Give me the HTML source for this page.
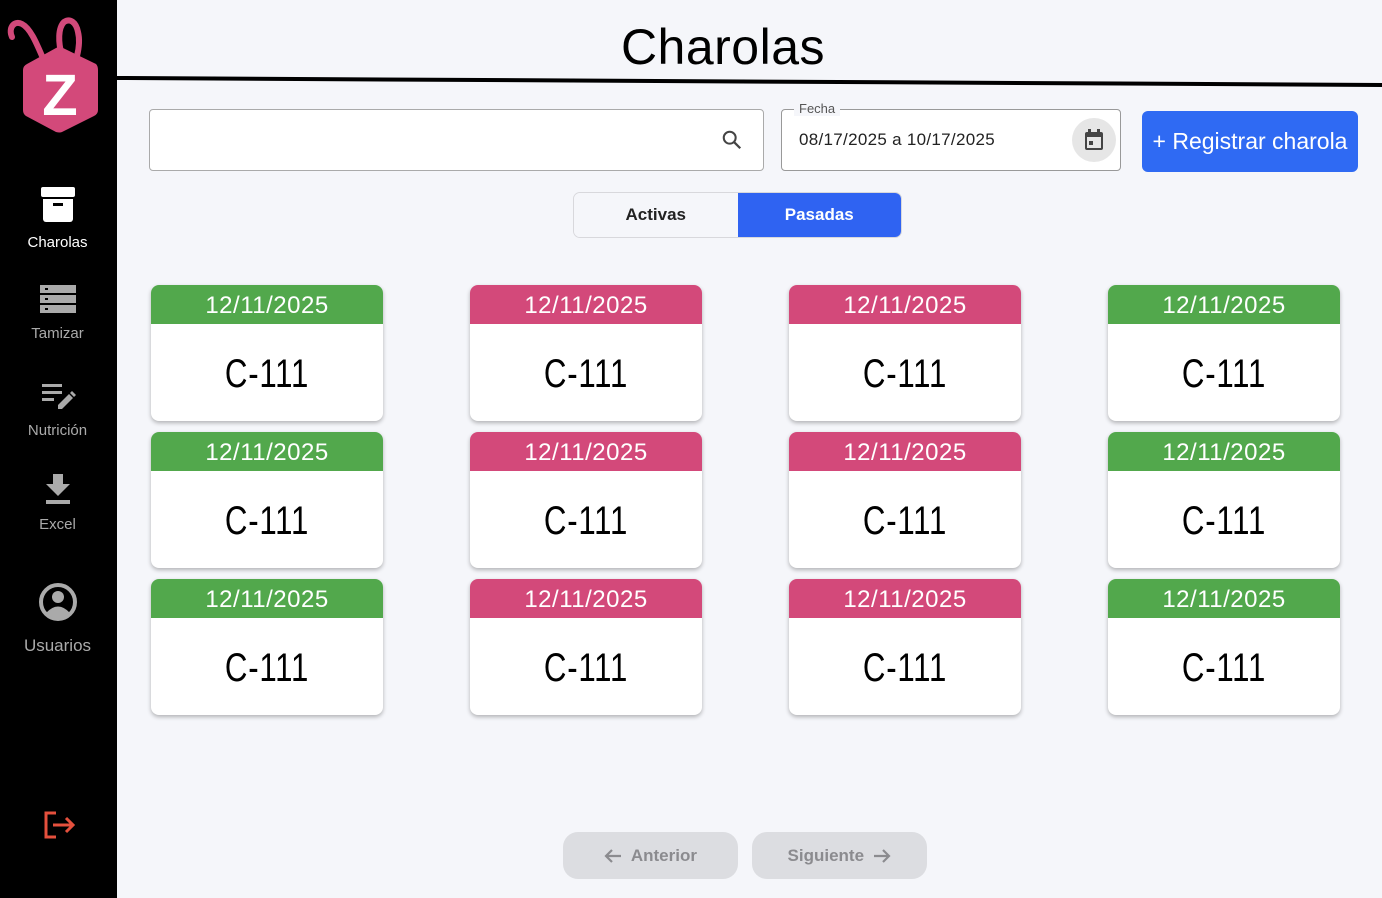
<!DOCTYPE html>
<html><head><meta charset="utf-8"><style>
*{box-sizing:border-box;margin:0;padding:0}
body{width:1382px;height:898px;background:#f5f6fa;font-family:"Liberation Sans",sans-serif;position:relative;overflow:hidden}
.side{position:absolute;left:0;top:0;width:117px;height:898px;background:#000}
.nav{position:absolute;left:0;width:115px;text-align:center;color:#aaa;font-size:15px}
.nav svg{display:block;margin:0 auto 10px}
h1{position:absolute;left:117px;width:1212px;top:18px;text-align:center;font-weight:400;font-size:50px;color:#000;letter-spacing:0.5px}
.search{position:absolute;left:149px;top:109px;width:615px;height:62px;border:1px solid #aaa;border-radius:4px;background:#fff}
.date{position:absolute;left:781px;top:109px;width:340px;height:62px;border:1px solid #999;border-radius:4px;background:#fff}
.date .lbl{position:absolute;left:12px;top:-9px;background:#f5f6fa;padding:0 5px;font-size:13px;color:#555}
.date .val{position:absolute;left:17px;top:20px;font-size:17px;color:#222;letter-spacing:0.3px}
.date .cal{position:absolute;right:4px;top:8px;width:44px;height:44px;border-radius:50%;background:#e6e6e6}
.btn{position:absolute;left:1142px;top:111px;width:216px;height:61px;border-radius:6px;background:#2f6af3;color:#fff;font-size:23px;text-align:center;line-height:61px}
.tabs{position:absolute;left:573px;top:192px;width:329px;height:46px;border:1px solid #d8d8dc;border-radius:7px;overflow:hidden;display:flex;font-weight:bold;font-size:17px}
.tabs div{flex:1;text-align:center;line-height:44px}
.card{position:absolute;width:232px;height:136px;border-radius:8px;background:#fff;box-shadow:0 2px 4px rgba(0,0,0,.28);overflow:hidden}
.card .h{height:39px;color:#fff;text-align:center;font-size:24px;line-height:41px;letter-spacing:0.5px}
.card .b{text-align:center;line-height:100px;color:#000}
.card .b span{display:inline-block;font-size:40px;transform:scaleX(0.78);letter-spacing:1px}
.g{background:#52a84c}.p{background:#d3497a}
.pg{position:absolute;top:832px;height:47px;width:175px;border-radius:15px;background:#dcdde1;color:#8b8b8f;font-size:17px;font-weight:bold;text-align:center;line-height:47px}
.pg svg{vertical-align:-3px}
</style></head><body>
<div class="side">
<svg style="position:absolute;left:0;top:0" width="110" height="140" viewBox="0 0 110 140">
<path d="M12 37 C8 28 14 20 22 24 C30 28 36 42 42 56" stroke="#d3497a" stroke-width="6" fill="none" stroke-linecap="round"/>
<path d="M62 56 C58 42 58 28 64 22 C70 18 76 22 78 32 C80 40 79 48 77 56" stroke="#d3497a" stroke-width="6" fill="none" stroke-linecap="round"/>
<path d="M63 48 L96 64 Q98 66 98 70 L98 110 Q98 114 94 116 L62 132 Q60 133 56 132 L26 116 Q23 114 23 110 L23 70 Q23 66 27 64 L56 48 Q59 46 63 48Z" fill="#d3497a"/>
<text x="60" y="115" text-anchor="middle" font-family="Liberation Sans" font-weight="bold" font-size="58" fill="#fff">Z</text>
</svg>
<div class="nav" style="top:186px;color:#fff"><svg width="36" height="38" viewBox="0 0 36 38"><rect x="1" y="1" width="34" height="10" rx="2" fill="#fff"/><path d="M3 13h30v20a3 3 0 0 1-3 3H6a3 3 0 0 1-3-3z" fill="#fff"/><rect x="13" y="17" width="10" height="3" fill="#000"/></svg>Charolas</div>
<div class="nav" style="top:285px"><svg width="36" height="30" viewBox="0 0 36 30"><rect x="0" y="0" width="36" height="8" fill="#aaa"/><rect x="0" y="10" width="36" height="8" fill="#aaa"/><rect x="0" y="20" width="36" height="8" fill="#aaa"/><rect x="5" y="3" width="3" height="2" fill="#000"/><rect x="5" y="13" width="3" height="2" fill="#000"/><rect x="5" y="23" width="3" height="2" fill="#000"/></svg>Tamizar</div>
<div class="nav" style="top:382px"><svg width="36" height="30" viewBox="0 0 36 30"><rect x="2" y="2" width="20" height="3" fill="#aaa"/><rect x="2" y="9" width="20" height="3" fill="#aaa"/><rect x="2" y="16" width="12" height="3" fill="#aaa"/><path d="M18 27 L18 23 L29 12 L33 16 L22 27Z M30 11 L32 9 L36 13 L34 15Z" fill="#aaa"/></svg>Nutrición</div>
<div class="nav" style="top:474px"><svg width="36" height="32" viewBox="0 0 36 32"><path d="M13 0h10v10h7L18 22 6 10h7z" fill="#aaa"/><rect x="6" y="26" width="24" height="4" fill="#aaa"/></svg>Excel</div>
<div class="nav" style="top:582px;font-size:17px"><svg width="40" height="40" viewBox="0 0 40 40" style="margin-bottom:14px"><circle cx="20" cy="20" r="17" fill="none" stroke="#aaa" stroke-width="4"/><circle cx="20" cy="15" r="6" fill="#aaa"/><path d="M8 31 Q20 18 32 31 Q20 40 8 31Z" fill="#aaa"/></svg>Usuarios</div>
<svg style="position:absolute;left:44px;top:811px" width="32" height="28" viewBox="0 0 32 28"><path d="M12 2H2v24h10" stroke="#e5503d" stroke-width="3" fill="none"/><path d="M9 14h20M22 7l7 7-7 7" stroke="#e5503d" stroke-width="3" fill="none"/></svg>
</div>
<h1>Charolas</h1>
<svg style="position:absolute;left:117px;top:74px" width="1265" height="16"><line x1="0" y1="4" x2="1265" y2="11" stroke="#000" stroke-width="4"/></svg>
<div class="search"><svg style="position:absolute;left:571px;top:19px" width="22" height="22" viewBox="0 0 24 24"><circle cx="9.5" cy="9.5" r="6.5" stroke="#444" stroke-width="2.2" fill="none"/><path d="M14.5 14.5L21 21" stroke="#444" stroke-width="2.5"/></svg></div>
<div class="date"><span class="lbl">Fecha</span><span class="val">08/17/2025 a 10/17/2025</span><div class="cal"><svg style="position:absolute;left:12px;top:11px" width="20" height="22" viewBox="0 0 20 22"><rect x="1" y="3" width="18" height="18" rx="2" fill="#444"/><rect x="3" y="8" width="14" height="11" fill="#e6e6e6"/><rect x="4" y="0" width="3" height="5" fill="#444"/><rect x="13" y="0" width="3" height="5" fill="#444"/><rect x="5" y="12" width="4" height="4" fill="#444"/></svg></div></div>
<div class="btn">+ Registrar charola</div>
<div class="tabs"><div style="background:#f5f6fa;color:#222">Activas</div><div style="background:#2f63f2;color:#fff">Pasadas</div></div>
<div class="card" style="left:151px;top:285px"><div class="h g">12/11/2025</div><div class="b"><span>C-111</span></div></div>
<div class="card" style="left:470px;top:285px"><div class="h p">12/11/2025</div><div class="b"><span>C-111</span></div></div>
<div class="card" style="left:789px;top:285px"><div class="h p">12/11/2025</div><div class="b"><span>C-111</span></div></div>
<div class="card" style="left:1108px;top:285px"><div class="h g">12/11/2025</div><div class="b"><span>C-111</span></div></div>
<div class="card" style="left:151px;top:432px"><div class="h g">12/11/2025</div><div class="b"><span>C-111</span></div></div>
<div class="card" style="left:470px;top:432px"><div class="h p">12/11/2025</div><div class="b"><span>C-111</span></div></div>
<div class="card" style="left:789px;top:432px"><div class="h p">12/11/2025</div><div class="b"><span>C-111</span></div></div>
<div class="card" style="left:1108px;top:432px"><div class="h g">12/11/2025</div><div class="b"><span>C-111</span></div></div>
<div class="card" style="left:151px;top:579px"><div class="h g">12/11/2025</div><div class="b"><span>C-111</span></div></div>
<div class="card" style="left:470px;top:579px"><div class="h p">12/11/2025</div><div class="b"><span>C-111</span></div></div>
<div class="card" style="left:789px;top:579px"><div class="h p">12/11/2025</div><div class="b"><span>C-111</span></div></div>
<div class="card" style="left:1108px;top:579px"><div class="h g">12/11/2025</div><div class="b"><span>C-111</span></div></div>
<div class="pg" style="left:563px"><svg width="18" height="16" viewBox="0 0 18 16"><path d="M17 8H2M8 2L2 8l6 6" stroke="#8b8b8f" stroke-width="2.2" fill="none"/></svg>&nbsp; Anterior</div>
<div class="pg" style="left:752px">Siguiente &nbsp;<svg width="18" height="16" viewBox="0 0 18 16"><path d="M1 8h15M10 2l6 6-6 6" stroke="#8b8b8f" stroke-width="2.2" fill="none"/></svg></div>
</body></html>
